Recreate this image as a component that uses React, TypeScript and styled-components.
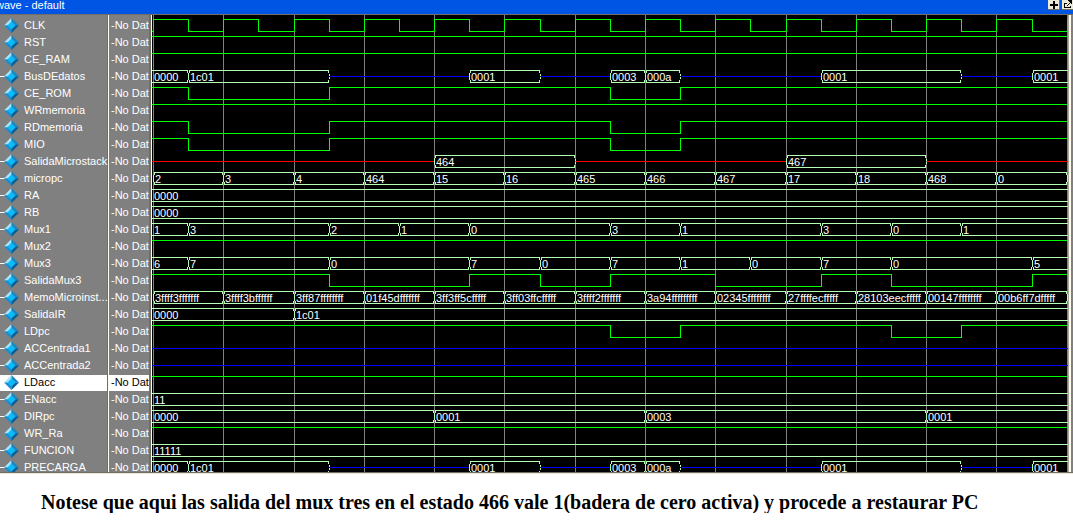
import React from "react";
import styled, { createGlobalStyle } from "styled-components";

const GlobalStyle = createGlobalStyle`
  * { box-sizing: border-box; }
  body { margin: 0; background: #fff; }
`;

const ROW = 17;
const LAST_ROW = 12;
const TOP_PAD = 3;
const uiFont = `"Liberation Sans", Arial, sans-serif`;

const Page = styled.main`
  display: flex;
  flex-direction: column;
`;

const TitleBar = styled.header`
  display: flex;
  justify-content: space-between;
  height: 15px;
  background: #0055e5;
  border-bottom: 1px solid #716f64;
  overflow: hidden;
`;

const Title = styled.h1`
  margin: 0 0 0 -4px;
  color: #fff;
  font: 400 11px/11px ${uiFont};
  white-space: pre;
`;

const TitleButtons = styled.div`
  display: flex;
  gap: 2px;
  margin-right: -1px;
`;

const TitleButton = styled.button`
  display: flex;
  width: 12px;
  height: 10px;
  padding: 0;
  border: 0;
  border-right: 1px solid #716f64;
  border-bottom: 1px solid #716f64;
  background: #ece9d8;
`;

const Panes = styled.div`
  display: flex;
  border-bottom: 1px solid #716f64;
  box-shadow: 0 1px 0 #ece9d8;
`;

const Column = styled.ul<{ $width: number; $edge: number }>`
  flex: none;
  width: ${(p) => p.$width}px;
  margin: 0;
  padding: ${TOP_PAD}px 0 0;
  list-style: none;
  background: #808080;
  border-right: ${(p) => p.$edge}px solid #716f64;
  font: 400 11px/14px ${uiFont};
`;

const Divider = styled.div`
  flex: none;
  width: 1px;
  background: #fffdf0;
`;

const Cell = styled.li<{ $selected?: boolean; $last?: boolean }>`
  display: flex;
  align-items: flex-start;
  height: ${(p) => (p.$last ? LAST_ROW : ROW)}px;
  white-space: pre;
  color: ${(p) => (p.$selected ? "#000" : "#fff")};
  background: linear-gradient(${(p) => (p.$selected ? "#fff" : "#808080")} 16px, #808080 16px);
`;

const IconSvg = styled.svg<{ $clip?: boolean }>`
  flex: none;
  max-height: ${(p) => (p.$clip ? LAST_ROW : ROW)}px;
`;

const NameText = styled.span`
  padding-left: 5px;
`;

const ValueText = styled.span`
  padding-left: 2px;
`;

const WavePane = styled.div`
  flex: 1;
  min-width: 0;
  overflow: hidden;
  background: #000;
`;

const WaveSvg = styled.svg`
  display: block;
  shape-rendering: crispEdges;
  font: 400 11px ${uiFont};
`;

const RightEdge = styled.div`
  flex: none;
  width: 5px;
  background: #808080;
  border-left: 1px solid #aca899;
  box-shadow: inset 2px 0 0 #fffdf0;
`;

const Caption = styled.p`
  margin: 0;
  padding: 18px 0 0 41px;
  color: #000;
  font: 700 20px/22px "Liberation Serif", "Times New Roman", serif;
  white-space: nowrap;
`;

/* Clock edges, in pixels from the left of the wave area. */
const EDGE = [
  1, 36, 71, 106, 142, 177, 212, 247, 282, 317, 352, 388, 423, 458,
  493, 528, 563, 598, 634, 669, 704, 739, 774, 809, 844, 880, 915,
];
const WIDTH = 916;

type Segment = [edge: number, value: string | null];
type Signal = { name: string; tree?: boolean } & (
  | { kind: "bit"; high: boolean; toggles?: number[] }
  | { kind: "bus"; segments: Segment[]; idle?: string }
  | { kind: "flat"; color: string }
);

const BLUE = "#0000ff";
const RED = "#ff0000";
const dataBus: Segment[] = [
  [-1, "0000"], [1, "1c01"], [5, null], [9, "0001"], [11, null], [13, "0003"],
  [14, "000a"], [15, null], [19, "0001"], [23, null], [25, "0001"],
];
const romToggles = [1, 5, 13, 15];
const clock = EDGE.map((_, i) => i);

const signals: Signal[] = [
  { name: "CLK", kind: "bit", high: false, toggles: clock },
  { name: "RST", kind: "bit", high: true },
  { name: "CE_RAM", kind: "bit", high: true },
  { name: "BusDEdatos", tree: true, kind: "bus", idle: BLUE, segments: dataBus },
  { name: "CE_ROM", kind: "bit", high: true, toggles: romToggles },
  { name: "WRmemoria", kind: "bit", high: true },
  { name: "RDmemoria", kind: "bit", high: true, toggles: romToggles },
  { name: "MIO", kind: "bit", high: true, toggles: romToggles },
  { name: "SalidaMicrostack", tree: true, kind: "bus", idle: RED,
    segments: [[-1, null], [8, "464"], [12, null], [18, "467"], [22, null]] },
  { name: "micropc", tree: true, kind: "bus",
    segments: [[0, "2"], [2, "3"], [4, "4"], [6, "464"], [8, "15"], [10, "16"], [12, "465"],
      [14, "466"], [16, "467"], [18, "17"], [20, "18"], [22, "468"], [24, "0"], [26, ""]] },
  { name: "RA", tree: true, kind: "bus", segments: [[-1, "0000"]] },
  { name: "RB", tree: true, kind: "bus", segments: [[-1, "0000"]] },
  { name: "Mux1", tree: true, kind: "bus",
    segments: [[-1, "1"], [1, "3"], [5, "2"], [7, "1"], [9, "0"], [13, "3"], [15, "1"],
      [19, "3"], [21, "0"], [23, "1"]] },
  { name: "Mux2", kind: "bit", high: true },
  { name: "Mux3", tree: true, kind: "bus",
    segments: [[-1, "6"], [1, "7"], [5, "0"], [9, "7"], [11, "0"], [13, "7"], [15, "1"],
      [17, "0"], [19, "7"], [21, "0"], [25, "5"]] },
  { name: "SalidaMux3", kind: "bit", high: true, toggles: [5, 9, 11, 13, 16, 19, 21, 25] },
  { name: "MemoMicroinst...", tree: true, kind: "bus",
    segments: [[0, "3ffff3fffffff"], [2, "3ffff3bffffff"], [4, "3ff87ffffffff"], [6, "01f45dfffffff"],
      [8, "3ff3ff5cfffff"], [10, "3ff03ffcfffff"], [12, "3ffff2fffffff"], [14, "3a94fffffffff"],
      [16, "02345ffffffff"], [18, "27ffffecfffff"], [20, "28103eecfffff"], [22, "00147ffffffff"],
      [24, "00b6ff7dfffff"], [26, ""]] },
  { name: "SalidaIR", tree: true, kind: "bus", segments: [[-1, "0000"], [4, "1c01"]] },
  { name: "LDpc", kind: "bit", high: true, toggles: [13, 15, 21, 23] },
  { name: "ACCentrada1", tree: true, kind: "flat", color: BLUE },
  { name: "ACCentrada2", tree: true, kind: "flat", color: BLUE },
  { name: "LDacc", kind: "bit", high: true },
  { name: "ENacc", tree: true, kind: "bus", segments: [[-1, "11"]] },
  { name: "DIRpc", tree: true, kind: "bus", segments: [[-1, "0000"], [8, "0001"], [14, "0003"], [22, "0001"]] },
  { name: "WR_Ra", kind: "bit", high: true },
  { name: "FUNCION", tree: true, kind: "bus", segments: [[-1, "11111"]] },
  { name: "PRECARGA", tree: true, kind: "bus", idle: BLUE, segments: dataBus },
];
const SELECTED = "LDacc";
const HEIGHT = TOP_PAD + ROW * (signals.length - 1) + LAST_ROW;

function bitPath(high: boolean, toggles: number[] = []) {
  let up = high;
  let d = `M0 ${up ? 1.5 : 13.5}`;
  toggles.forEach((t) => {
    up = !up;
    d += `H${EDGE[t] + 0.5}V${up ? 1.5 : 13.5}`;
  });
  return d + `H${WIDTH}`;
}

function BusSegment({ from, to, value }: { from: number; to: number | null; value: string }) {
  const open = from < 0;
  const x = open ? 0 : EDGE[from];
  const end = to === null ? WIDTH : EDGE[to];
  const l = open ? x : x + 1;
  let d = `M${l} 1.5H${end}M${l} 13.5H${end}`;
  if (!open) d += `M${x + 1.5} 1V4M${x + 0.5} 4V11M${x + 1.5} 11V14`;
  if (to !== null) d += `M${end - 0.5} 1V4M${end + 0.5} 5V7M${end + 0.5} 8V10M${end - 0.5} 11V14`;
  return (
    <>
      <path d={d} stroke="#b4ffb4" fill="none" />
      {value && <text x={open ? 2 : x + 2} y={12} fill="#fff">{value}</text>}
    </>
  );
}

function Trace({ signal }: { signal: Signal }) {
  if (signal.kind === "bit")
    return <path d={bitPath(signal.high, signal.toggles)} stroke="#00ff00" fill="none" />;
  if (signal.kind === "flat")
    return <path d={`M0 7.5H${WIDTH}`} stroke={signal.color} />;
  return (
    <>
      {signal.segments.map(([from, value], i) => {
        const next = signal.segments[i + 1];
        const to = next ? next[0] : null;
        if (value === null) {
          const x1 = from < 0 ? 0 : EDGE[from] + 1;
          return <path key={i} d={`M${x1} 7.5H${to === null ? WIDTH : EDGE[to]}`} stroke={signal.idle} />;
        }
        return <BusSegment key={i} from={from} to={to} value={value} />;
      })}
    </>
  );
}

function SignalIcon({ tree, clip }: { tree?: boolean; clip?: boolean }) {
  const height = clip ? LAST_ROW : 15;
  return (
    <IconSvg width="19" height={height} viewBox={`0 0 19 ${height}`} $clip={clip} aria-hidden="true">
      {tree && <path d="M0 7.5H5" stroke="#fff" shapeRendering="crispEdges" />}
      <path d="M11.5 0L4 7.5H8L11.5 4Z" fill="#a8e4f8" />
      <path d="M11.5 0L19 7.5H15L11.5 4Z" fill="#1c86c0" />
      <path d="M4 7.5L11.5 15V11L8 7.5Z" fill="#1890d0" />
      <path d="M19 7.5L11.5 15V11L15 7.5Z" fill="#0c5c94" />
      <path d="M11.5 3.5L15.5 7.5L11.5 11.5L7.5 7.5Z" fill="#08bcfc" />
    </IconSvg>
  );
}

export default function App() {
  const last = signals.length - 1;
  return (
    <Page>
      <GlobalStyle />
      <TitleBar>
        <Title>wave - default</Title>
        <TitleButtons>
          <TitleButton aria-label="Add">
            <svg width="11" height="9" viewBox="0 0 11 9" shapeRendering="crispEdges">
              <path d="M2 4H10V6H2ZM5 1H7V9H5Z" fill="#000" />
            </svg>
          </TitleButton>
          <TitleButton aria-label="Undock">
            <svg width="11" height="9" viewBox="0 0 11 9" shapeRendering="crispEdges">
              <path d="M5 3.5H2.5V7.5H8.5V6" stroke="#000" fill="none" />
              <path d="M6 0H10V4H9V3H8V4H7V5H6V6H5V5H6V4H7V3H8V2H7V1H6Z" fill="#000" />
            </svg>
          </TitleButton>
        </TitleButtons>
      </TitleBar>
      <Panes>
        <Column $width={108} $edge={1}>
          {signals.map((s, i) => (
            <Cell key={s.name} $selected={s.name === SELECTED} $last={i === last}>
              <SignalIcon tree={s.tree} clip={i === last} />
              <NameText>{s.name}</NameText>
            </Cell>
          ))}
        </Column>
        <Divider />
        <Column $width={42} $edge={2}>
          {signals.map((s, i) => (
            <Cell key={s.name} $selected={s.name === SELECTED} $last={i === last}>
              <ValueText>-No Dat</ValueText>
            </Cell>
          ))}
        </Column>
        <Divider />
        <WavePane>
          <WaveSvg width={WIDTH} height={HEIGHT} role="img" aria-label="Signal waveforms">
            {EDGE.filter((_, i) => i % 2 === 0).map((x) => (
              <path key={x} d={`M${x + 0.5} 0V${HEIGHT}`} stroke="#808080" />
            ))}
            {signals.map((s, i) => (
              <g key={s.name} transform={`translate(0 ${TOP_PAD + i * ROW})`}>
                <Trace signal={s} />
              </g>
            ))}
          </WaveSvg>
        </WavePane>
        <RightEdge />
      </Panes>
      <Caption>
        Notese que aqui las salida del mux tres en el estado 466 vale 1(badera de cero activa) y procede a restaurar PC
      </Caption>
    </Page>
  );
}
